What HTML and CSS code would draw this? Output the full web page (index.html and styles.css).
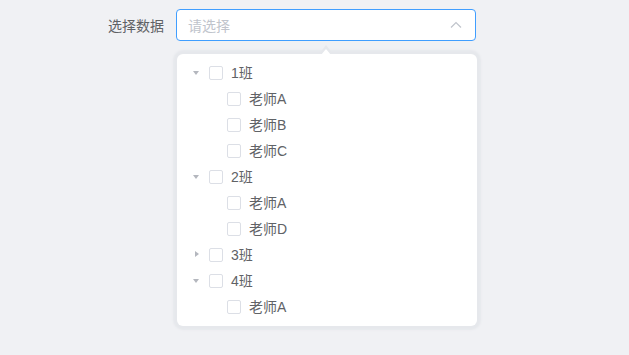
FILE: index.html
```html
<html>
	<head>
		<title>Tree Select</title>
		<link rel="stylesheet" href="styles.css">
	</head>
	<body>
	<div class="container">
		<div class="formRow">
			<label class="formLabel">选择数据</label>
			<div class="selectInput">
				<span class="placeholder">请选择</span>
				<svg class="chevron" width="12" height="8" viewBox="0 0 12 8"><path d="M1 6.5 L6 1.5 L11 6.5" fill="none" stroke="#c0c4cc" stroke-width="1.2"/></svg>
			</div>
		</div>

		<!-- dropdown panel with tree -->
		<div class="dropdown">
			<ul class="tree">
				<li class="node"><span class="caret down"></span><span class="check"></span><span class="label">1班</span></li>
				<li class="node child"><span class="caret none"></span><span class="check"></span><span class="label">老师A</span></li>
				<li class="node child"><span class="caret none"></span><span class="check"></span><span class="label">老师B</span></li>
				<li class="node child"><span class="caret none"></span><span class="check"></span><span class="label">老师C</span></li>
				<li class="node"><span class="caret down"></span><span class="check"></span><span class="label">2班</span></li>
				<li class="node child"><span class="caret none"></span><span class="check"></span><span class="label">老师A</span></li>
				<li class="node child"><span class="caret none"></span><span class="check"></span><span class="label">老师D</span></li>
				<li class="node"><span class="caret right"></span><span class="check"></span><span class="label">3班</span></li>
				<li class="node"><span class="caret down"></span><span class="check"></span><span class="label">4班</span></li>
				<li class="node child"><span class="caret none"></span><span class="check"></span><span class="label">老师A</span></li>
			</ul>
		</div>
	</div>
	</body>
</html>
```

FILE: styles.css
```css
body {
	margin: 0;
	background-color: #f0f1f4;
	font-family: "Liberation Sans", "Noto Sans CJK SC", sans-serif;
	font-size: 14px;
	color: #606266;
}

.container {
	padding-top: 9px;
}

.formRow {
	display: flex;
	align-items: center;
	padding-left: 108px;
}

.formLabel {
	width: 56px;
	margin-right: 12px;
	text-align: right;
	color: #606266;
}

.selectInput {
	box-sizing: border-box;
	width: 300px;
	height: 32px;
	border: 1px solid #409eff;
	border-radius: 4px;
	background-color: #fff;
	display: flex;
	align-items: center;
	justify-content: space-between;
	padding: 0 13px 0 11px;
}

.placeholder {
	color: #c0c4cc;
}

.chevron {
	display: block;
}

/* Dropdown panel */
.dropdown {
	position: relative;
	box-sizing: border-box;
	width: 300px;
	margin-left: 177px;
	margin-top: 13px;
	background-color: #fff;
	border-radius: 6px;
	box-shadow: 0 0 2px 4px #e6e8ec;
	padding: 6px 0;
}

/* popper arrow */
.dropdown::before {
	content: "";
	position: absolute;
	top: -9px;
	left: 142px;
	border-left: 7px solid transparent;
	border-right: 7px solid transparent;
	border-bottom: 9px solid #e6e8ec;
}

.dropdown::after {
	content: "";
	position: absolute;
	top: -5px;
	left: 144px;
	border-left: 5px solid transparent;
	border-right: 5px solid transparent;
	border-bottom: 6px solid #fff;
}

.tree {
	list-style: none;
	margin: 0;
	padding: 0;
}

.node {
	display: flex;
	align-items: center;
	height: 26px;
	padding-left: 13px;
}

.node.child {
	padding-left: 31px;
}

.caret {
	width: 12px;
	height: 12px;
	margin-right: 7px;
	position: relative;
}

.caret.down::before {
	content: "";
	position: absolute;
	left: 3px;
	top: 4px;
	border-left: 3.5px solid transparent;
	border-right: 3.5px solid transparent;
	border-top: 4px solid #b4b7be;
}

.caret.right::before {
	content: "";
	position: absolute;
	left: 5px;
	top: 2px;
	border-top: 3.5px solid transparent;
	border-bottom: 3.5px solid transparent;
	border-left: 4px solid #b4b7be;
}

.check {
	box-sizing: border-box;
	width: 14px;
	height: 14px;
	border: 1px solid #dcdfe6;
	border-radius: 2px;
	background-color: #fff;
	margin-right: 8px;
}

.label {
	color: #606266;
	line-height: 26px;
}
```
